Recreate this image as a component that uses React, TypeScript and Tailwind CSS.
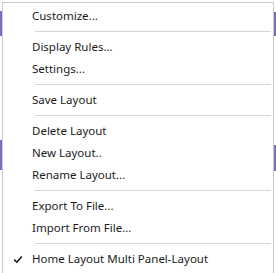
import React from "react";

type Entry = { label?: string; sep?: boolean; checked?: boolean };

const entries: Entry[] = [
  { label: "Customize..." },
  { sep: true },
  { label: "Display Rules..." },
  { label: "Settings..." },
  { sep: true },
  { label: "Save Layout" },
  { sep: true },
  { label: "Delete Layout" },
  { label: "New Layout.." },
  { label: "Rename Layout..." },
  { sep: true },
  { label: "Export To File..." },
  { label: "Import From File..." },
  { sep: true },
  { label: "Home Layout Multi Panel-Layout", checked: true },
];

export default function App() {
  return (
    <div
      className="relative w-[276px] h-[273px] overflow-hidden bg-white"
      style={{ fontFamily: '"Segoe UI", "Noto Sans", "Liberation Sans", sans-serif' }}
    >
      <div className="pt-[2px] px-[2px]">
        <div className="border border-[#c9c9c9] bg-white pt-[2px] pb-[4px] h-[280px]">
          {entries.map((e, i) =>
            e.sep ? (
              <div key={i} className="h-[9px] flex items-center pl-[32px] pr-[2px]">
                <div className="h-px w-full bg-[#d5d5d5]" />
              </div>
            ) : (
              <div key={i} className="h-[22px] flex items-center text-[11.5px] text-[#1b1b1b]">
                <div className="w-[29px] flex items-center justify-center">
                  {e.checked && (
                    <svg width="10" height="9" viewBox="0 0 10 9">
                      <path d="M1.2 4.6 L3.8 7.2 L8.8 1.4" fill="none" stroke="#1b1b1b" strokeWidth="1.6" />
                    </svg>
                  )}
                </div>
                <span>{e.label}</span>
              </div>
            )
          )}
        </div>
      </div>
      <div className="absolute left-0 top-[11px] w-[2px] h-[25px] bg-[#7b6cc9]" />
      <div className="absolute left-0 top-[140px] w-[2px] h-[30px] bg-[#7b6cc9]" />
      <div className="absolute right-0 top-[12px] w-[2px] h-[24px] bg-[#7b6cc9]" />
      <div className="absolute right-0 top-[145px] w-[2px] h-[26px] bg-[#7b6cc9]" />
    </div>
  );
}
